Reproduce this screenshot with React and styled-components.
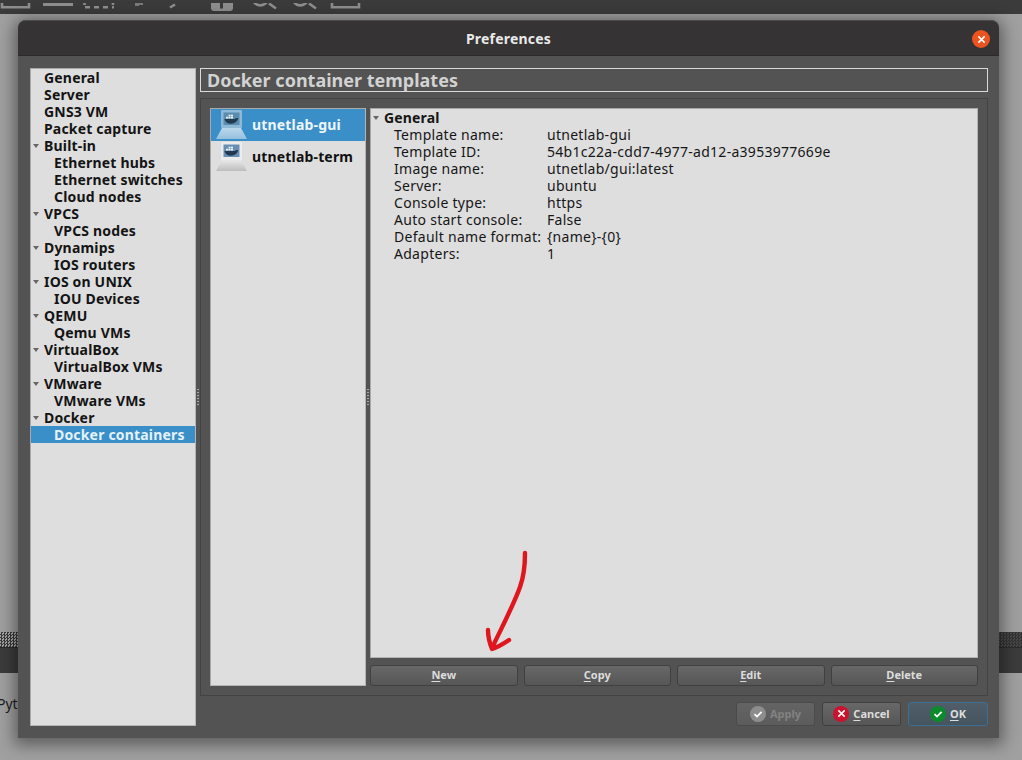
import React from "react";
import styled, { createGlobalStyle, css } from "styled-components";

const Global = createGlobalStyle`
  html, body { margin: 0; padding: 0; background: #9c9c9c; }
  * { box-sizing: border-box; }
`;
const FONT = `"Noto Sans", "Open Sans", sans-serif`;

const Page = styled.div`
  position: relative; width: 1022px; height: 760px; overflow: hidden;
  display: flex; flex-direction: column; background: #a0a0a0; font-family: ${FONT};
`;
const TopBar = styled.div`height: 14px; background: #3b3b3b; flex: none; overflow: hidden;`;
const Spacer = styled.div`flex: 1;`;
const Checker = styled.div`
  height: 15px; flex: none;
  background:
    linear-gradient(to right, transparent 999px, rgba(50,50,50,.8) 999px),
    repeating-conic-gradient(#3a3a3a 0 25%, #a8a8a8 0 50%) 0 0 / 3px 3px;
`;
const DarkBar = styled.div`height: 26px; flex: none; background: #3c3c3c; border-top: 1px solid #2c2c2c;`;
const Status = styled.div`
  height: 87px; flex: none; padding: 21px 0 0 0; margin-left: -3px;
  font-size: 14px; line-height: 20px; color: #1c1c1c;
`;
const Dialog = styled.div`
  position: absolute; left: 18px; top: 20px; width: 981px; height: 718px;
  display: flex; flex-direction: column; background: #535353;
  border-radius: 8px 8px 0 0; box-shadow: 0 3px 16px 4px rgba(0,0,0,.42);
`;
const TitleBar = styled.div`
  position: relative; height: 36px; flex: none; background: #353333; padding-top: 1px;
  border-radius: 8px 8px 0 0; border-top: 1px solid #4c4c4c; border-bottom: 1px solid #2b2b2b;
  display: flex; align-items: center; justify-content: center;
  color: #eaeaea; font-size: 14px; font-weight: 700; letter-spacing: .2px;
`;
const CloseButton = styled.div`
  position: absolute; right: 9px; top: 9px; width: 18px; height: 18px; border-radius: 50%;
  background: #e95420; display: flex; align-items: center; justify-content: center;
`;
const Body = styled.div`flex: 1; min-height: 0; display: flex; padding: 12px 11px 12px 12px;`;
const Panel = styled.div`
  background: #dedede; border: 1px solid #a9a9a9; border-bottom-color: #b5b5b5; border-right-color: #b5b5b5;
`;
const Tree = styled(Panel)`width: 166px; flex: none; padding-top: 0;`;
const TreeRow = styled.div`
  position: relative; height: 17px; line-height: 17px; padding-left: ${p => p.$child ? 23 : 13}px;
  font-size: 14px; font-weight: 700; color: #141414; white-space: nowrap;
  letter-spacing: .18px;
  ${p => p.$selected && css`background: #3a8fc9; color: #e4f2fb;`}
`;
const Caret = styled.span`
  position: absolute; left: 2px; top: 7px; width: 0; height: 0;
  border-left: 3.5px solid transparent; border-right: 3.5px solid transparent; border-top: 4px solid #666;
`;
const Splitter = styled.div`width: 4px; flex: none; display: flex; align-items: center; justify-content: center;`;
const Grip = styled.div`
  width: 2px; height: 17px;
  background: repeating-linear-gradient(to bottom, #a8a8a8 0 1px, #5a5a5a 1px 3px);
`;
const Right = styled.div`flex: 1; min-width: 0; display: flex; flex-direction: column;`;
const Heading = styled.div`
  height: 24px; flex: none; border: 1px solid #dadada; padding-left: 6px;
  font-size: 18px; line-height: 23px; font-weight: 700; color: #d2d2d2; white-space: nowrap;
`;
const Group = styled.div`
  margin-top: 6px; height: 598px; flex: none; border: 1px solid #434343; padding: 9px;
  display: flex;
`;
const List = styled(Panel)`width: 156px; flex: none;`;
const ListRow = styled.div`
  height: 32px; display: flex; align-items: center; padding-left: 4px; gap: 5px;
  font-size: 14px; font-weight: 700; letter-spacing: .17px;
  color: ${p => p.$selected ? "#eef6fb" : "#111"};
  background: ${p => p.$selected ? "#3a8fc9" : "transparent"};
`;
const ListLabel = styled.span`margin-top: -2px;`;
const Side = styled.div`flex: 1; min-width: 0; display: flex; flex-direction: column;`;
const Details = styled(Panel)`
  position: relative; height: 550px; flex: none; color: #161616; font-size: 14px;
`;
const DetailHead = styled.div`
  position: relative; height: 17px; line-height: 17px; padding-left: 13px; font-weight: 700; letter-spacing: .16px;
`;
const DetailRow = styled.div`
  display: grid; grid-template-columns: 153px 1fr; height: 17px; line-height: 17px; padding-left: 23px;
  white-space: nowrap; letter-spacing: .28px;
`;
const Arrow = styled.svg`position: absolute; left: 109px; top: 437px; overflow: visible;`;
const ActionRow = styled.div`
  margin-top: 7px; display: grid; grid-template-columns: repeat(4, 1fr); column-gap: 6px;
`;
const Btn = styled.div`
  height: 21px; border: 1px solid #404040; border-radius: 3px; padding-bottom: 3px;
  background: linear-gradient(#686868, #565656);
  display: flex; align-items: center; justify-content: center;
  color: #dcdcdc; font-size: 11px; font-weight: 700;
  u { text-underline-offset: 2px; }
`;
const Footer = styled.div`margin-top: 6px; display: flex; justify-content: flex-end; gap: 7px; padding-right: 0;`;
const FootBtn = styled(Btn)`
  width: 79px; height: 24px; gap: 4px; font-size: 11px; padding-bottom: 1px;
  ${p => p.$disabled && css`color: #828282; background: linear-gradient(#646464, #5c5c5c); border-color: #4a4a4a;`}
  ${p => p.$primary && css`background: linear-gradient(#4f5e69, #46545e); border-color: #3b6f96; width: 80px;`}
`;
const Dot = styled.span`
  width: 16px; height: 16px; border-radius: 50%; flex: none; background: ${p => p.$color};
  display: flex; align-items: center; justify-content: center;
`;

const CheckMark = () => (
  <svg width="10" height="10" viewBox="0 0 10 10"><path d="M1.5 5.2 4 7.6 8.6 2.8" fill="none" stroke="#fff" strokeWidth="1.7" /></svg>
);
const CrossMark = ({ size = 9 }) => (
  <svg width={size} height={size} viewBox="0 0 10 10"><path d="M1.5 1.5 8.5 8.5M8.5 1.5 1.5 8.5" fill="none" stroke="#fff" strokeWidth="1.7" /></svg>
);

const ToolbarArt = () => (
  <svg width="372" height="14" viewBox="0 0 372 14">
    <g fill="none" stroke="#8e8e8e" strokeWidth="2.6">
      <path d="M2 -3V4.300H29V-3" />
      <path d="M85 4.300H90M94 4.300H99M103 4.300H108M112 4.300H114" />
      <path d="M84.500 0V2M113 0V2" />
      <path d="M170 4.500 175 1.500" />
      <path d="M332 -3V4.300H359V-3" />
      <path d="M254 -1C257 3.500 263 3.500 267 -1M269 0.500 276 5.500" />
      <path d="M294 -1C297 3.500 303 3.500 307 -1M309 0.500 316 5.500" />
    </g>
    <rect x="43" y="-4" width="30" height="7" fill="#8e8e8e" />
    <path d="M135 0h8v2h-4v1h-4z" fill="#7a7a7a" />
    <rect x="211" y="-6" width="22" height="14" rx="3" fill="#8e8e8e" />
    <rect x="220" y="0" width="3" height="5.500" fill="#3b3b3b" />
  </svg>
);

const DockerMonitor = ({ selected }) => (
  <svg width="32" height="32" viewBox="0 0 32 32" style={{ flex: "none" }}>
    <defs>
      <linearGradient id={selected ? "baseS" : "baseU"} x1="0" y1="0" x2="0" y2="1">
        <stop offset="0" stopColor={selected ? "#bcd8ea" : "#e8e8e8"} />
        <stop offset="1" stopColor={selected ? "#94c0de" : "#bdbdbd"} />
      </linearGradient>
    </defs>
    <path d="M7 19H26L32 30H1Z" fill={`url(#${selected ? "baseS" : "baseU"})`} />
    <rect x="6" y="1" width="21" height="18" rx="1" fill={selected ? "#8fb9d6" : "#ececec"} />
    <rect x="8.500" y="3.500" width="16" height="12.500" fill={selected ? "#5a8cae" : "#668fb3"} />
    <path d="M9.500 10H20c.6-1.100 1.900-1.400 3-.8.500.3.300.7 0 .9-.8 2.500-3.200 4.700-7 4.700-3.500 0-6-1.700-6.500-4.800Z" fill="#223a50" />
    <g fill="#eef3f6">
      <rect x="11" y="7.800" width="2" height="1.700" />
      <rect x="13.500" y="7.800" width="2" height="1.700" />
      <rect x="16" y="7.800" width="2" height="1.700" />
      <rect x="13.500" y="5.700" width="2" height="1.700" />
      <rect x="16" y="5.700" width="2" height="1.700" />
    </g>
  </svg>
);

const treeItems = [
  ["General"], ["Server"], ["GNS3 VM"], ["Packet capture"],
  ["Built-in", "h"], ["Ethernet hubs", "c"], ["Ethernet switches", "c"], ["Cloud nodes", "c"],
  ["VPCS", "h"], ["VPCS nodes", "c"],
  ["Dynamips", "h"], ["IOS routers", "c"],
  ["IOS on UNIX", "h"], ["IOU Devices", "c"],
  ["QEMU", "h"], ["Qemu VMs", "c"],
  ["VirtualBox", "h"], ["VirtualBox VMs", "c"],
  ["VMware", "h"], ["VMware VMs", "c"],
  ["Docker", "h"], ["Docker containers", "s"],
];
const details = [
  ["Template name:", "utnetlab-gui"],
  ["Template ID:", "54b1c22a-cdd7-4977-ad12-a3953977669e"],
  ["Image name:", "utnetlab/gui:latest"],
  ["Server:", "ubuntu"],
  ["Console type:", "https"],
  ["Auto start console:", "False"],
  ["Default name format:", "{name}-{0}"],
  ["Adapters:", "1"],
];

export default function App() {
  return (
    <Page>
      <Global />
      <TopBar><ToolbarArt /></TopBar>
      <Spacer />
      <Checker />
      <DarkBar />
      <Status>Pyt</Status>
      <Dialog>
        <TitleBar>
          Preferences
          <CloseButton><CrossMark /></CloseButton>
        </TitleBar>
        <Body>
          <Tree>
            {treeItems.map(([label, kind]) => (
              <TreeRow key={label} $child={kind === "c" || kind === "s"} $selected={kind === "s"}>
                {kind === "h" && <Caret />}
                {label}
              </TreeRow>
            ))}
          </Tree>
          <Splitter><Grip /></Splitter>
          <Right>
            <Heading>Docker container templates</Heading>
            <Group>
              <List>
                <ListRow $selected><DockerMonitor selected /><ListLabel>utnetlab-gui</ListLabel></ListRow>
                <ListRow><DockerMonitor /><ListLabel>utnetlab-term</ListLabel></ListRow>
              </List>
              <Splitter><Grip /></Splitter>
              <Side>
                <Details>
                  <DetailHead><Caret />General</DetailHead>
                  {details.map(([k, v]) => (
                    <DetailRow key={k}><span>{k}</span><span>{v}</span></DetailRow>
                  ))}
                  <Arrow width="55" height="110" viewBox="480 546 55 110">
                    <path d="M525 553C525 566 524 576 520 587C514 604 503 625 492 648M488 630C488 638 490 644 492 649C498 647 503 644 509 640"
                      fill="none" stroke="#e0161f" strokeWidth="4.400" strokeLinecap="round" strokeLinejoin="round" />
                  </Arrow>
                </Details>
                <ActionRow>
                  <Btn><span><u>N</u>ew</span></Btn>
                  <Btn><span><u>C</u>opy</span></Btn>
                  <Btn><span><u>E</u>dit</span></Btn>
                  <Btn><span><u>D</u>elete</span></Btn>
                </ActionRow>
              </Side>
            </Group>
            <Footer>
              <FootBtn $disabled><Dot $color="#8d8d8d"><CheckMark /></Dot><span>Apply</span></FootBtn>
              <FootBtn><Dot $color="#c9132f"><CrossMark /></Dot><span><u>C</u>ancel</span></FootBtn>
              <FootBtn $primary><Dot $color="#0c8b2d"><CheckMark /></Dot><span><u>O</u>K</span></FootBtn>
            </Footer>
          </Right>
        </Body>
      </Dialog>
    </Page>
  );
}
